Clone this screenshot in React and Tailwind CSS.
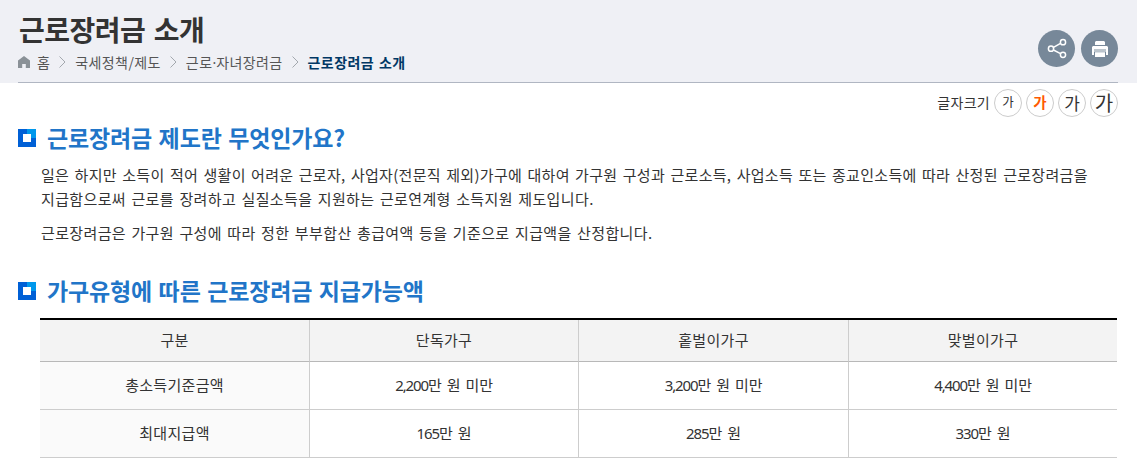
const fontSizes = [
  { id: "small", style: "text-[12.5px] text-[#333]" },
  { id: "normal", style: "text-[14.5px] font-bold text-[#ff5a00]" },
  { id: "large", style: "text-[17px] text-[#333]" },
  { id: "xlarge", style: "text-[20px] text-[#333]" },
];

const columns = ["구분", "단독가구", "홑벌이가구", "맞벌이가구"];

const rows = [
  { label: "총소득기준금액", values: ["2,200", "3,200", "4,400"], unit: "만 원 미만" },
  { label: "최대지급액", values: ["165", "285", "330"], unit: "만 원" },
];

function HomeIcon() {
  return (
    <svg width="12" height="12" viewBox="0 0 12 12" className="mr-[7px] shrink-0">
      <path d="M6 0 12 4.500V12H7.800V8H4.200V12H0V4.500Z" fill="#8a9197" />
    </svg>
  );
}

function Chevron() {
  return (
    <svg width="7" height="12" viewBox="0 0 7 12" fill="none" className="mx-[9px] shrink-0">
      <path d="M.5.5 6 6 .5 11.5" stroke="#a3a8ae" />
    </svg>
  );
}

function ShareIcon() {
  return (
    <svg width="37" height="37" viewBox="0 0 37 37" fill="none" stroke="#fff" strokeWidth="1.5">
      <path d="M15.500 17.400 22.500 13.400M15.500 20 22.500 23.600" />
      <circle cx="13" cy="18.700" r="2.600" />
      <circle cx="25" cy="12.200" r="2.600" />
      <circle cx="25" cy="24.800" r="2.600" />
    </svg>
  );
}

function PrintIcon() {
  return (
    <svg width="37" height="37" viewBox="0 0 37 37">
      <path d="M15 11H23L24 12V15H14V12Z" fill="#fff" />
      <path d="M12 16H26L27 17V25H11V17Z" fill="#fff" />
      <path d="M13 19H25V21H13Z" fill="#bcc5cc" />
      <path d="M13 21.500H25V25H24V22.500H14V25H13Z" fill="#778899" />
      <path d="M14 22.500H24V27H14Z" fill="#fff" />
    </svg>
  );
}

function SectionTitle({ children, className }) {
  return (
    <h2 className={`flex h-[30px] items-center text-[23px] leading-[30px] font-bold text-[#2175c8] ${className}`}>
      <svg width="18" height="18" viewBox="0 0 18 18" className="mr-[11px] shrink-0">
        <path d="M0 0H18V18H0Z" fill="#0060d6" />
        <path d="M9 0H18V9H9Z" fill="#0098ec" />
        <path d="M5 5H13V13H5Z" fill="#fff" />
      </svg>
      <span className="-mt-[2px] tracking-[-0.15px] [word-spacing:1.5px]">{children}</span>
    </h2>
  );
}

export default function App() {
  return (
    <div className="h-[469px] bg-white font-['Noto_Sans_CJK_KR',sans-serif] text-[#333]">
      <header className="h-[83px] bg-[#eff0f5] pr-[19px] pl-[18px]">
        <div className="flex h-[83px] justify-between border-b border-[#b0b6c2]">
          <div>
            <h1 className="mt-[9px] ml-px text-[28px] leading-[40px] font-bold tracking-[-0.5px] [word-spacing:2.5px]">
              근로장려금 소개
            </h1>
            <nav className="mt-[3px] flex items-center text-[14px] leading-[20px] tracking-[0.4px] text-[#555]">
              <HomeIcon />
              <span>홈</span>
              <Chevron />
              <span>국세정책/제도</span>
              <Chevron />
              <span>
                근로<span className="font-['Noto_Sans'] leading-none tracking-normal">·</span>자녀장려금
              </span>
              <Chevron />
              <strong className="font-bold text-[#003764] [word-spacing:1.5px]">근로장려금 소개</strong>
            </nav>
          </div>
          <div className="flex gap-[6px] pt-[30px]">
            <button type="button" aria-label="공유" className="size-[37px] rounded-full bg-[#778899]">
              <ShareIcon />
            </button>
            <button type="button" aria-label="인쇄" className="size-[37px] rounded-full bg-[#778899]">
              <PrintIcon />
            </button>
          </div>
        </div>
      </header>

      <main className="pr-[19px] pl-[18px]">
        <div className="flex items-center justify-end gap-1 pt-[6px]">
          <span className="pb-[2px] text-[14px] leading-[20px] tracking-[0.3px]">글자크기</span>
          {fontSizes.map(({ id, style }) => (
            <button
              key={id}
              type="button"
              className={`flex size-[28px] items-center justify-center rounded-full border border-[#ccc] pb-px leading-none ${style}`}
            >
              가
            </button>
          ))}
        </div>

        <SectionTitle className="mt-[6px]">근로장려금 제도란 무엇인가요?</SectionTitle>
        <div className="mt-[10px] ml-[23px] text-[15px] leading-[24px] tracking-[0.37px] whitespace-nowrap [word-spacing:1.7px]">
          <p className="tracking-[0.3px]">
            일은 하지만 소득이 적어 생활이 어려운 근로자, 사업자(전문직 제외)가구에 대하여 가구원 구성과 근로소득, 사업소득 또는 종교인소득에 따라 산정된 근로장려금을
          </p>
          <p>지급함으로써 근로를 장려하고 실질소득을 지원하는 근로연계형 소득지원 제도입니다.</p>
          <p className="mt-[10px]">
            근로장려금은 가구원 구성에 따라 정한 부부합산 총급여액 등을 기준으로 지급액을 산정합니다.
          </p>
        </div>

        <SectionTitle className="mt-[31px]">가구유형에 따른 근로장려금 지급가능액</SectionTitle>
        <table className="mt-[12px] ml-[22px] w-[1077px] table-fixed border-separate border-spacing-0 border-t-2 border-black text-center text-[15px] leading-[20px] tracking-[0.3px]">
          <colgroup>
            <col className="w-[270px]" />
            <col className="w-[269px]" />
            <col className="w-[270px]" />
            <col className="w-[268px]" />
          </colgroup>
          <thead>
            <tr className="h-[42px] bg-[#f3f3f3]">
              {columns.map((column) => (
                <th
                  key={column}
                  className="border-r border-b border-r-[#cdcdcd] border-b-[#b8b8b8] p-0 pb-[2px] font-normal last:border-r-0"
                >
                  {column}
                </th>
              ))}
            </tr>
          </thead>
          <tbody>
            {rows.map((row) => (
              <tr key={row.label} className="h-[48px]">
                <th className="border-r border-b border-[#cdcdcd] bg-[#fafafa] p-0 pb-[2px] font-normal">
                  {row.label}
                </th>
                {row.values.map((value) => (
                  <td
                    key={value}
                    className="border-r border-b border-[#cdcdcd] p-0 pb-[2px] tracking-[-0.2px] last:border-r-0 [word-spacing:2px]"
                  >
                    <span className="font-['Noto_Sans'] leading-none tracking-[-1.1px]">{value}</span>
                    {row.unit}
                  </td>
                ))}
              </tr>
            ))}
          </tbody>
        </table>
      </main>
    </div>
  );
}
